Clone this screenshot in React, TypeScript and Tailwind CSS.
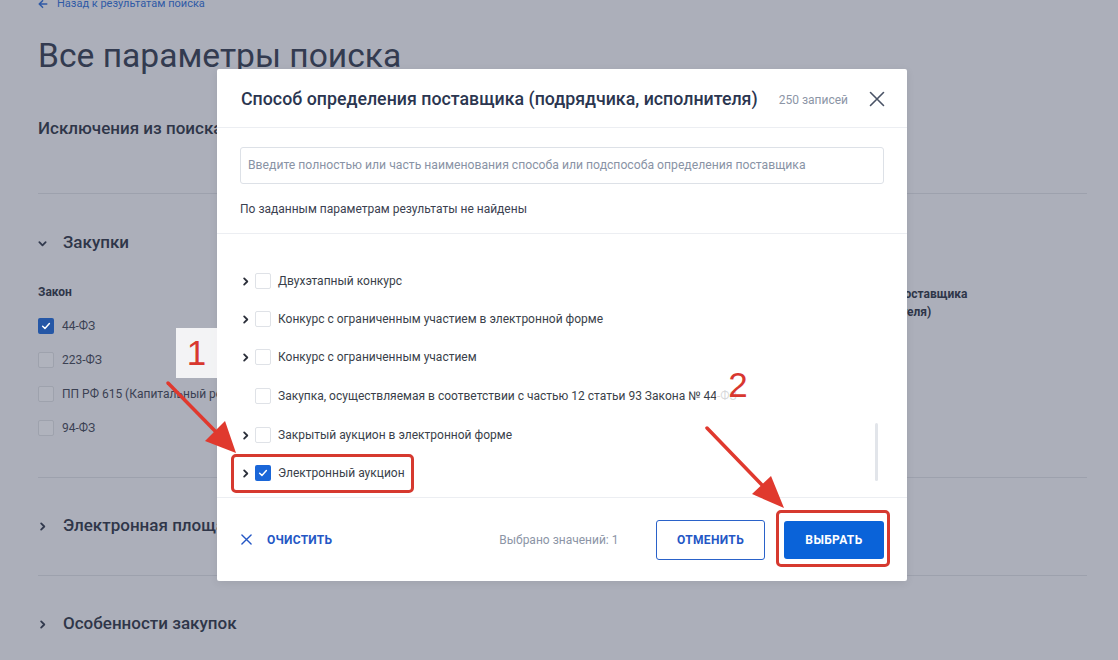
import React from "react";

const font = { fontFamily: "Roboto, 'Noto Sans', Arial, sans-serif" };

const Chevron = ({ dir = "right", className = "" }: { dir?: "right" | "down"; className?: string }) => (
  <svg viewBox="0 0 10 10" className={className} fill="none" stroke="currentColor" strokeWidth="2" strokeLinecap="round" strokeLinejoin="round">
    {dir === "right" ? <path d="M3.5 1.5 7 5 3.5 8.5" /> : <path d="M1.5 3.5 5 7 8.5 3.5" />}
  </svg>
);

const Check = () => (
  <svg viewBox="0 0 16 16" className="w-[12px] h-[12px]" fill="none" stroke="white" strokeWidth="2" strokeLinecap="round" strokeLinejoin="round">
    <path d="M3.5 8.3 6.6 11.2 12.5 4.8" />
  </svg>
);

const PageCheck = ({ checked = false, label }: { checked?: boolean; label: string }) => (
  <div className="h-[34px] flex items-center gap-[8px]">
    {checked ? (
      <div className="w-[16px] h-[16px] rounded-[2px] bg-[#2557a6] flex items-center justify-center">
        <Check />
      </div>
    ) : (
      <div className="w-[16px] h-[16px] rounded-[2px] border border-[#9ea2ad] bg-[#b0b3bd]" />
    )}
    <span className="text-[12px] text-[#3b4153]">{label}</span>
  </div>
);

const Section = ({ title, open = false }: { title: string; open?: boolean }) => (
  <div className="h-[24px] flex items-center">
    <div className="w-[25px] flex items-center">
      <Chevron dir={open ? "down" : "right"} className="w-[9px] h-[9px] text-[#323a4e]" />
    </div>
    <span className="text-[17px] font-medium text-[#2f3649]">{title}</span>
  </div>
);

const items = [
  { label: "Двухэтапный конкурс", chevron: true, h: "h-[38px]" },
  { label: "Конкурс с ограниченным участием в электронной форме", chevron: true, h: "h-[38px]" },
  { label: "Конкурс с ограниченным участием", chevron: true, h: "h-[38px]" },
  { label: "Закупка, осуществляемая в соответствии с частью 12 статьи 93 Закона № 44-ФЗ", chevron: false, h: "h-[40px]" },
  { label: "Закрытый аукцион в электронной форме", chevron: true, h: "h-[38px]" },
  { label: "Электронный аукцион", chevron: true, h: "h-[38px]", checked: true },
];

export default function App() {
  return (
    <div className="relative w-[1118px] h-[660px] overflow-hidden bg-[#acafba]" style={font}>
      {/* page underneath */}
      <div className="pl-[38px] pr-[31px]">
        <div className="-mt-[2px] h-[12px] flex items-center gap-[9px] text-[11px] leading-[12px] text-[#2f5aa6]">
          <svg viewBox="0 0 12 12" className="w-[10px] h-[10px]" fill="none" stroke="currentColor" strokeWidth="1.8" strokeLinecap="round" strokeLinejoin="round">
            <path d="M10.5 6H1.8M5.5 2 1.5 6l4 4" />
          </svg>
          <span>Назад к результатам поиска</span>
        </div>
        <h1 className="mt-[26px] text-[33.6px] leading-[40px] text-[#333b50]">Все параметры поиска</h1>
        <div className="mt-[41px] h-[24px] flex items-center text-[17px] font-medium text-[#2f3649]">Исключения из поиска</div>
        <div className="mt-[52px] h-px bg-[#9da1ad]" />
        <div className="mt-[37px]">
          <Section title="Закупки" open />
        </div>
        <div className="mt-[29px] flex">
          <div className="w-[300px]">
            <div className="h-[16px] flex items-center text-[12px] font-bold text-[#2f3649]">Закон</div>
            <div className="mt-[9px]">
              <PageCheck checked label="44-ФЗ" />
              <PageCheck label="223-ФЗ" />
              <PageCheck label="ПП РФ 615 (Капитальный ремонт)" />
              <PageCheck label="94-ФЗ" />
            </div>
          </div>
          <div className="ml-[438px] w-[215px] mt-[1px] text-[12px] leading-[18px] font-bold text-[#2f3649]">
            Способ определения поставщика (подрядчика, исполнителя)
          </div>
        </div>
        <div className="mt-[32px] h-px bg-[#9da1ad]" />
        <div className="mt-[36px]">
          <Section title="Электронная площадка" />
        </div>
        <div className="mt-[37px] h-px bg-[#9da1ad]" />
        <div className="mt-[36px]">
          <Section title="Особенности закупок" />
        </div>
      </div>

      {/* modal */}
      <div className="absolute left-[217px] top-[69px] w-[690px] h-[512px] bg-white rounded-[2px] flex flex-col shadow-[0_2px_8px_rgba(0,0,0,0.08)]">
        <div className="h-[59px] shrink-0 flex items-center pl-[24px] pr-[22px] border-b border-[#eceef2]">
          <span className="text-[17.8px] font-medium text-[#2b3650] pt-[3px]">Способ определения поставщика (подрядчика, исполнителя)</span>
          <span className="ml-auto text-[12px] text-[#8c95a6] pt-[4px]">250 записей</span>
          <svg viewBox="0 0 16 16" className="ml-[21px] w-[16px] h-[16px] mt-[2px]" fill="none" stroke="#4a5366" strokeWidth="1.6" strokeLinecap="round">
            <path d="M1.5 1.5 14.5 14.5M14.5 1.5 1.5 14.5" />
          </svg>
        </div>
        <div className="shrink-0 px-[23px] pt-[19px] pb-[16px] border-b border-[#eceef2]">
          <div className="h-[37px] border border-[#dde1e7] rounded-[3px] flex items-center px-[7px] text-[12.2px] text-[#8993a5]">
            Введите полностью или часть наименования способа или подспособа определения поставщика
          </div>
          <div className="mt-[17px] h-[16px] flex items-center text-[12px] text-[#3b4150]">
            По заданным параметрам результаты не найдены
          </div>
        </div>
        <div className="relative flex-1 overflow-hidden pt-[28px] pl-[24px]">
          {items.map((it) => (
            <div key={it.label} className={`${it.h} flex items-center`}>
              <div className="w-[14px] flex items-center">
                {it.chevron && <Chevron className="w-[9px] h-[9px] text-[#2b2f3a]" />}
              </div>
              {it.checked ? (
                <div className="w-[16px] h-[16px] rounded-[2px] bg-[#1a66d8] flex items-center justify-center">
                  <Check />
                </div>
              ) : (
                <div className="w-[16px] h-[16px] rounded-[2px] border border-[#dfe2e7]" />
              )}
              <span className="ml-[7px] text-[12px] text-[#3a3f4a]">{it.label}</span>
            </div>
          ))}
          <div className="absolute left-[658px] top-[189px] w-[3px] h-[58px] rounded-full bg-[#e2e5ea]" />
        </div>
        <div className="h-[84px] shrink-0 border-t border-[#eceef2] flex items-center pl-[24px] pr-[23px]">
          <svg viewBox="0 0 12 12" className="w-[11px] h-[11px]" fill="none" stroke="#2457c5" strokeWidth="1.5" strokeLinecap="round">
            <path d="M1 1 11 11M11 1 1 11" />
          </svg>
          <span className="ml-[15px] text-[12px] font-bold tracking-[0.02em] text-[#2457c5]">ОЧИСТИТЬ</span>
          <span className="ml-[167px] text-[12px] text-[#8c95a6]">Выбрано значений: 1</span>
          <button className="ml-auto w-[109px] h-[40px] rounded-[3px] border border-[#2a62c9] text-[12px] font-bold tracking-[0.03em] text-[#2457c5]">
            ОТМЕНИТЬ
          </button>
          <button className="ml-[19px] w-[100px] h-[38px] rounded-[3px] bg-[#0a63d9] text-[12px] font-bold tracking-[0.03em] text-white">
            ВЫБРАТЬ
          </button>
        </div>
      </div>

      {/* annotations */}
      <div className="absolute left-[176px] top-[328px] w-[41px] h-[50px] bg-white/85 flex items-center justify-center text-[35px] text-[#d8372f]" style={{ fontFamily: "'Liberation Sans', Arial, sans-serif" }}>
        1
      </div>
      <div className="absolute left-[716px] top-[360px] w-[44px] h-[50px] bg-white/80 flex items-center justify-center text-[35px] text-[#d8372f]" style={{ fontFamily: "'Liberation Sans', Arial, sans-serif" }}>
        2
      </div>
      <div className="absolute left-[231px] top-[454px] w-[183px] h-[39px] border-[3px] border-[#d6392f] rounded-[5px]" />
      <div className="absolute left-[776px] top-[510px] w-[114px] h-[57px] border-[3px] border-[#d6392f] rounded-[5px]" />
      <svg className="absolute inset-0 pointer-events-none" width="1118" height="660">
        <line x1="168" y1="383" x2="216" y2="432" stroke="#e0392e" strokeWidth="3.5" strokeLinecap="round" />
        <polygon points="236,453 205,441 225,421" fill="#e0392e" />
        <line x1="707" y1="428" x2="762" y2="485" stroke="#e0392e" strokeWidth="3.5" strokeLinecap="round" />
        <polygon points="784,508 752,494 771,476" fill="#e0392e" />
      </svg>
    </div>
  );
}
